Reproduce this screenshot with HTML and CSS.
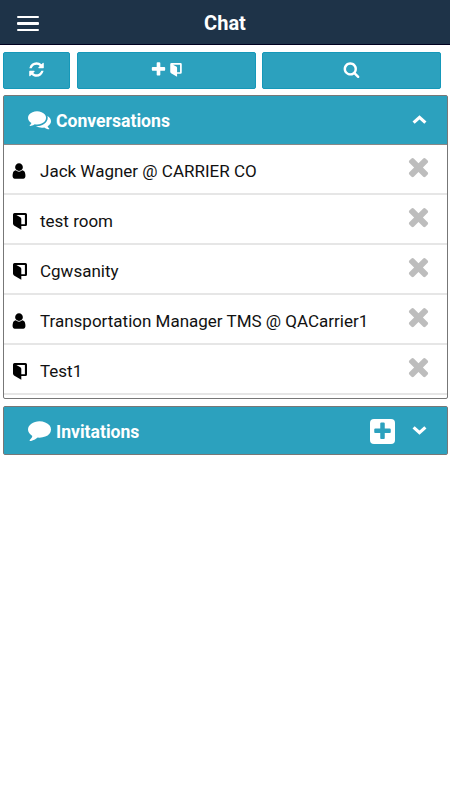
FILE: index.html
```
<!DOCTYPE html>
<html lang="en">
<head>
  <meta charset="UTF-8" />
  <meta name="viewport" content="width=device-width, initial-scale=1.0"/>
  <title>Chat</title>
  <link rel="stylesheet" href="styles.css">
</head>
<body>

  <!-- Icon shapes, referenced by the rest of the page -->
  <svg class="icon-defs">
    <symbol id="icon-refresh" viewBox="0 0 1792 1792"><path d="M1639 1056q0 5-1 7-64 268-268 434.5t-478 166.5q-146 0-282.5-55t-243.5-157l-129 129q-19 19-45 19t-45-19-19-45v-448q0-26 19-45t45-19h448q26 0 45 19t19 45-19 45l-137 137q71 66 161 102t187 36q134 0 250-65t186-179q11-17 53-117 8-23 30-23h192q13 0 22.5 9.5t9.5 22.5zm25-800v448q0 26-19 45t-45 19h-448q-26 0-45-19t-19-45 19-45l138-138q-148-137-349-137-134 0-250 65t-186 179q-11 17-53 117-8 23-30 23h-199q-13 0-22.5-9.5t-9.5-22.5v-7q65-268 270-434.5t480-166.5q146 0 284 55.5t245 156.5l130-129q19-19 45-19t45 19 19 45z"/></symbol>
    <symbol id="icon-plus" viewBox="0 0 1792 1792"><path d="M1600 736v192q0 40-28 68t-68 28h-416v416q0 40-28 68t-68 28h-192q-40 0-68-28t-28-68v-416h-416q-40 0-68-28t-28-68v-192q0-40 28-68t68-28h416v-416q0-40 28-68t68-28h192q40 0 68 28t28 68v416h416q40 0 68 28t28 68z"/></symbol>
    <symbol id="icon-search" viewBox="0 0 1792 1792"><path d="M1216 832q0-185-131.5-316.5t-316.5-131.5-316.5 131.5-131.5 316.5 131.5 316.5 316.5 131.5 316.5-131.5 131.5-316.5zm512 832q0 52-38 90t-90 38q-54 0-90-38l-343-342q-179 124-399 124-143 0-273.5-55.5t-225-150-150-225-55.5-273.5 55.5-273.5 150-225 225-150 273.5-55.5 273.5 55.5 225 150 150 225 55.5 273.5q0 220-124 399l343 343q37 37 37 90z"/></symbol>
    <symbol id="icon-comments" viewBox="0 0 1792 1792"><path d="M1408 768q0 139-94 257t-256.5 186.5-353.5 68.5q-86 0-176-16-124 88-278 128-36 9-86 16h-3q-11 0-20.5-8t-11.5-21q-1-3-1-6.5t.5-6.5 2-6l2.5-5 3.5-5.5 4-5 4.5-5 4-4.5q5-6 23-25t26-29.5 22.5-29 25-38.5 20.5-44q-124-72-195-177t-71-224q0-139 94-257t256.5-186.5 353.5-68.5 353.5 68.5 256.5 186.5 94 257zm384 256q0 120-71 224.5t-195 176.5q10 24 20.5 44t25 38.5 22.5 29 26 29.5 23 25q1 1 4 4.5t4.5 5 4 5 3.5 5.5l2.5 5 2 6 .5 6.5-1 6.5q-3 14-13 22t-22 7q-50-7-86-16-154-40-278-128-90 16-176 16-271 0-472-132 58 4 88 4 161 0 309-45t264-129q125-92 192-212t67-254q0-77-23-152 129 71 204 178t75 230z"/></symbol>
    <symbol id="icon-comment" viewBox="0 0 1792 1792"><path d="M1792 896q0 174-120 321.5t-326 233-450 85.5q-70 0-145-8-198 175-460 242-49 14-114 22-17 2-30.5-9t-17.5-29v-1q-3-4-.5-12t2-10 4.5-9.5l6-9 7-8.5 8-9q7-8 31-34.5t34.5-38 31-39.5 32.5-51 27-59 26-76q-157-89-247.5-220t-90.5-281q0-130 71-248.5t191-204.5 286-136.5 348-50.5q244 0 450 85.5t326 233 120 321.5z"/></symbol>
    <symbol id="icon-user" viewBox="0 0 1792 1792"><path d="M1536 1399q0 109-62.5 187t-150.5 78h-854q-88 0-150.5-78t-62.5-187q0-85 8.5-160.5t31.5-152 58.5-131 94-89 134.5-34.5q131 128 313 128t313-128q76 0 134.5 34.5t94 89 58.5 131 31.5 152 8.5 160.5zm-256-887q0 159-112.5 271.5t-271.5 112.5-271.5-112.5-112.5-271.5 112.5-271.5 271.5-112.5 271.5 112.5 112.5 271.5z"/></symbol>
    <symbol id="icon-times" viewBox="0 0 1792 1792"><path d="M1490 1322q0 40-28 68l-136 136q-28 28-68 28t-68-28l-294-294-294 294q-28 28-68 28t-68-28l-136-136q-28-28-28-68t28-68l294-294-294-294q-28-28-28-68t28-68l136-136q28-28 68-28t68 28l294 294 294-294q28-28 68-28t68 28l136 136q28 28 28 68t-28 68l-294 294 294 294q28 28 28 68z"/></symbol>
    <symbol id="icon-door" viewBox="0 0 14 17"><path fill-rule="evenodd" d="M1.5 0H12.5Q14 0 14 1.5V11.5Q14 13 12.5 13H8.3V16.8L1 12.4Q0 11.8 0 10.6V1.5Q0 0 1.5 0ZM3.4 2L7.3 4.2Q8.3 4.8 8.3 6V11.2H11.9V2Z"/></symbol>
    <symbol id="icon-chevron" viewBox="0 0 14 9"><path class="chevron-line" d="M1.5 7L7 2L12.5 7"/></symbol>
  </svg>

  <header class="topbar">
    <button class="menu-button" aria-label="Menu">
      <span></span>
      <span></span>
      <span></span>
    </button>
    <h1>Chat</h1>
  </header>

  <div class="toolbar">
    <button aria-label="Refresh"><svg class="icon-tool"><use href="#icon-refresh"/></svg></button>
    <button aria-label="New room">
      <svg class="icon-tool"><use href="#icon-plus"/></svg>
      <svg class="icon-door-small"><use href="#icon-door"/></svg>
    </button>
    <button aria-label="Search"><svg class="icon-tool"><use href="#icon-search"/></svg></button>
  </div>

  <section class="panel conversations">
    <div class="panel-header">
      <svg class="icon-panel"><use href="#icon-comments"/></svg>
      <h2>Conversations</h2>
      <svg class="chevron"><use href="#icon-chevron"/></svg>
    </div>
    <ul class="list">
      <li>
        <svg class="icon-user"><use href="#icon-user"/></svg>
        <span>Jack Wagner @ CARRIER CO</span>
        <svg class="icon-remove"><use href="#icon-times"/></svg>
      </li>
      <li>
        <svg class="icon-door"><use href="#icon-door"/></svg>
        <span>test room</span>
        <svg class="icon-remove"><use href="#icon-times"/></svg>
      </li>
      <li>
        <svg class="icon-door"><use href="#icon-door"/></svg>
        <span>Cgwsanity</span>
        <svg class="icon-remove"><use href="#icon-times"/></svg>
      </li>
      <li>
        <svg class="icon-user"><use href="#icon-user"/></svg>
        <span>Transportation Manager TMS @ QACarrier1</span>
        <svg class="icon-remove"><use href="#icon-times"/></svg>
      </li>
      <li>
        <svg class="icon-door"><use href="#icon-door"/></svg>
        <span>Test1</span>
        <svg class="icon-remove"><use href="#icon-times"/></svg>
      </li>
    </ul>
  </section>

  <section class="panel invitations">
    <div class="panel-header">
      <svg class="icon-panel"><use href="#icon-comment"/></svg>
      <h2>Invitations</h2>
      <button class="add-button" aria-label="Add"><svg><use href="#icon-plus"/></svg></button>
      <svg class="chevron chevron-down"><use href="#icon-chevron"/></svg>
    </div>
  </section>

</body>
</html>
```
FILE: styles.css
```
* {
  box-sizing: border-box;
}

body {
  margin: 0;
  font-family: Roboto, sans-serif;
  background-color: #fff;
  color: #111;
}

svg {
  display: block;
  flex: none;
  fill: currentColor;
}

button {
  padding: 0;
  border: none;
  color: #fff;
  cursor: pointer;
}

.icon-defs {
  display: none;
}

.topbar {
  display: grid;
  grid-template-columns: 56px 1fr 56px;
  align-items: center;
  height: 45px;
  background-color: #1e3348;
  border-bottom: 1px solid #00001f;
  color: #fff;
}

.topbar h1 {
  margin: 2px 0 0;
  font-size: 20px;
  line-height: 24px;
  text-align: center;
}

.menu-button {
  display: flex;
  flex-direction: column;
  gap: 4px;
  width: 22px;
  margin: 3px 0 0 17px;
  background: none;
}

.menu-button span {
  width: 22px;
  height: 2.4px;
  background-color: #fff;
  border-radius: 1px;
}

.toolbar {
  display: grid;
  grid-template-columns: 67px 179px 179px;
  gap: 6.5px;
  padding: 7px 3px 6px;
}

.toolbar button {
  display: flex;
  align-items: center;
  justify-content: center;
  gap: 3px;
  height: 37px;
  padding-bottom: 2px;
  background-color: #2ca1be;
  border: 1px solid #1598b9;
  border-radius: 2px;
}

.icon-tool {
  width: 17px;
  height: 17px;
}

.icon-door-small {
  width: 12px;
  height: 14px;
}

.panel {
  margin: 0 2.5px 7px;
  border: 1px solid #777;
  border-radius: 2px;
}

.panel-header {
  display: flex;
  align-items: center;
  height: 47px;
  padding: 0 19.5px 0 24.5px;
  background-color: #2ca1be;
  color: #fff;
}

.panel-header h2 {
  margin: 2px auto 0 5px;
  font-size: 17.6px;
  line-height: 24px;
}

.icon-panel {
  width: 23px;
  height: 23px;
  margin-bottom: 2px;
}

.chevron {
  width: 15px;
  height: 10px;
  margin-bottom: 1px;
}

.chevron-line {
  fill: none;
  stroke: #fff;
  stroke-width: 3;
}

.chevron-down {
  transform: rotate(180deg);
}

.add-button {
  display: flex;
  align-items: center;
  justify-content: center;
  width: 25px;
  height: 25px;
  margin: 2px 17px 0 0;
  background-color: #fff;
  border-radius: 4px;
  color: #2ca1be;
}

.add-button svg {
  width: 21px;
  height: 21px;
}

.conversations {
  height: 304px;
}

.conversations .panel-header {
  height: 49px;
  border-bottom: 1px solid #888;
}

.list {
  margin: 0;
  padding: 0;
  list-style: none;
}

.list li {
  display: flex;
  align-items: center;
  height: 50px;
  padding: 0 14px 0 9px;
  border-bottom: 2px solid #e6e6e6;
}

.list span {
  flex: 1;
  margin-top: 4px;
  font-size: 17px;
  line-height: 24px;
  white-space: nowrap;
}

.icon-user {
  width: 18px;
  height: 18px;
  margin: 4px 12.5px 0 -3px;
  color: #000;
}

.icon-door {
  width: 14px;
  height: 17px;
  margin: 5px 13.5px 0 0;
  color: #000;
}

.icon-remove {
  width: 29px;
  height: 29px;
  margin-bottom: 5px;
  color: #bdbdbd;
}
```
